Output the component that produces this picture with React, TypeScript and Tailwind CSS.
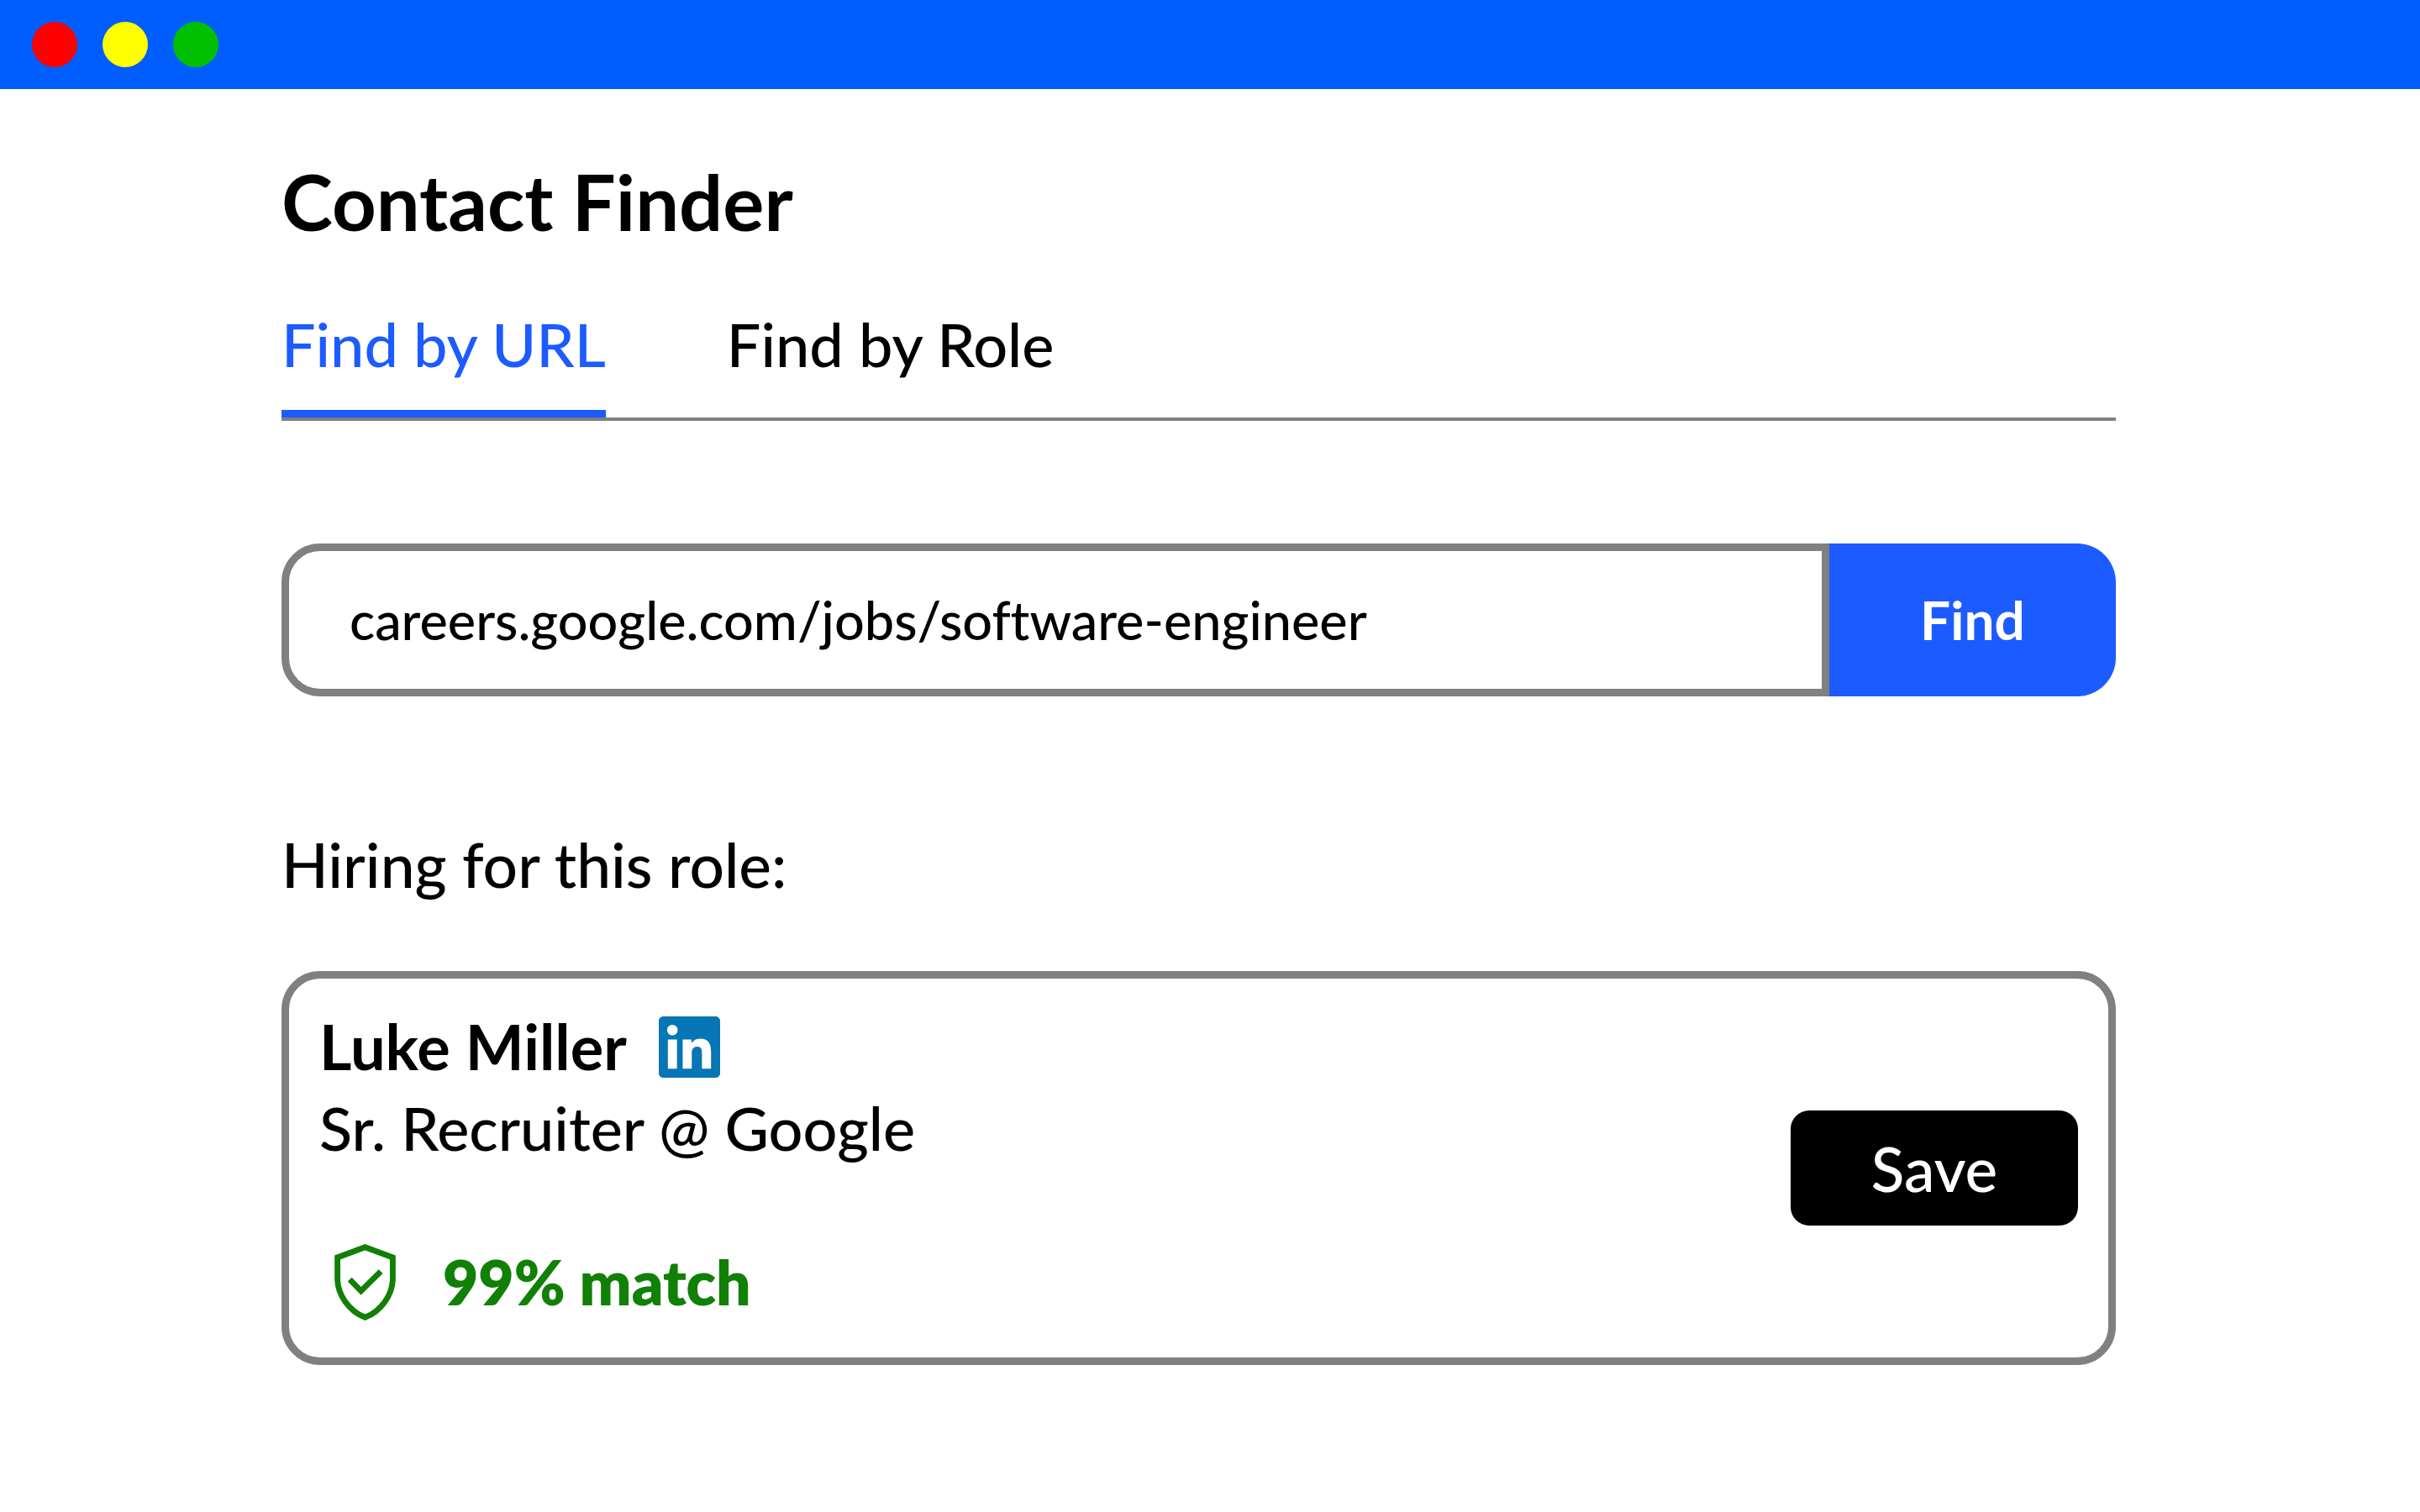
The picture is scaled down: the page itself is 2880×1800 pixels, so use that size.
import { useState } from "react";

const tabs = ["Find by URL", "Find by Role"];

function LinkedInLogo() {
  return (
    <svg viewBox="0 0 24 24" className="size-[73px] fill-[#0676b5]" aria-hidden="true">
      <path d="M20.447 20.452h-3.554v-5.569c0-1.328-.027-3.037-1.852-3.037-1.853 0-2.136 1.445-2.136 2.939v5.667H9.351V9h3.414v1.561h.046c.477-.9 1.637-1.85 3.37-1.85 3.601 0 4.267 2.37 4.267 5.455v6.286zM5.337 7.433c-1.144 0-2.063-.926-2.063-2.065 0-1.138.92-2.063 2.063-2.063 1.14 0 2.064.925 2.064 2.063 0 1.139-.925 2.065-2.064 2.065zm1.782 13.019H3.555V9h3.564v11.452zM22.225 0H1.771C.792 0 0 .774 0 1.729v20.542C0 23.227.792 24 1.771 24h20.451C23.2 24 24 23.227 24 22.271V1.729C24 .774 23.2 0 22.222 0h.003z" />
    </svg>
  );
}

function ShieldCheck() {
  return (
    <svg
      viewBox="0 0 217 271"
      className="h-[91px] w-[73px] fill-none stroke-[#118006]"
      strokeWidth="20.5"
      aria-hidden="true"
    >
      <path d="M108.5 11 206.5 47.5V122C206.5 180 165 238 108.5 260 52 238 10.5 180 10.5 122V47.5Z" />
      <path d="M54 125.5 94 166.5 164 97" />
    </svg>
  );
}

export default function App() {
  const [active, setActive] = useState(tabs[0]);
  const [url, setUrl] = useState("careers.google.com/jobs/software-engineer");

  return (
    <div className="min-h-screen bg-white font-['Lato',sans-serif] font-medium text-black">
      <header className="flex h-[106px] items-center gap-[30px] bg-[#005eff] pl-[38px]">
        <span className="size-[54px] rounded-full bg-[#ff0000]" />
        <span className="size-[54px] rounded-full bg-[#ffff00]" />
        <span className="size-[54px] rounded-full bg-[#00c000]" />
      </header>

      <main className="pt-[79px] pr-[362px] pl-[335px]">
        <h1 className="text-[92px] leading-[110px] font-bold">Contact Finder</h1>

        <div role="tablist" className="mt-[70px] flex gap-[144px] border-b-4 border-[#808080]">
          {tabs.map((tab) => (
            <button
              key={tab}
              type="button"
              role="tab"
              aria-selected={tab === active}
              onClick={() => setActive(tab)}
              className={
                tab === active
                  ? "border-b-9 border-[#1c5bff] pb-[35px] text-[72px] leading-[88px] text-[#1c5bff]"
                  : "border-b-9 border-transparent pb-[35px] text-[72px] leading-[88px]"
              }
            >
              {tab}
            </button>
          ))}
        </div>

        <form className="mt-[146px] flex h-[182px]" onSubmit={(e) => e.preventDefault()}>
          <input
            aria-label="Job posting URL"
            value={url}
            onChange={(e) => setUrl(e.target.value)}
            className="min-w-0 flex-1 rounded-l-[46px] border-9 border-[#808080] px-[72px] text-[63px] outline-none [font-variant-ligatures:none]"
          />
          <button
            type="submit"
            className="w-[341px] rounded-r-[46px] bg-[#1c5bff] text-[64px] font-bold text-white"
          >
            Find
          </button>
        </form>

        <h2 className="mt-[156px] text-[73px] leading-[88px]">Hiring for this role:</h2>

        <article className="mt-[83px] flex items-center justify-between rounded-[46px] border-9 border-[#808080] px-[36px] text-[73px] leading-[96px]">
          <div className="pt-[33px] pb-[42px]">
            <div className="flex items-center gap-[38px]">
              <h3 className="text-[74px] font-bold">Luke Miller</h3>
              <a href="#linkedin" aria-label="Luke Miller on LinkedIn">
                <LinkedInLogo />
              </a>
            </div>
            <p className="text-[72px]">Sr. Recruiter @ Google</p>
            <p className="mt-[88px] flex items-center gap-[56px] pl-[18px] font-extrabold text-[#118006]">
              <ShieldCheck />
              99% match
            </p>
          </div>
          <button
            type="button"
            className="h-[137px] w-[342px] rounded-[22px] bg-black text-white"
          >
            Save
          </button>
        </article>
      </main>
    </div>
  );
}
